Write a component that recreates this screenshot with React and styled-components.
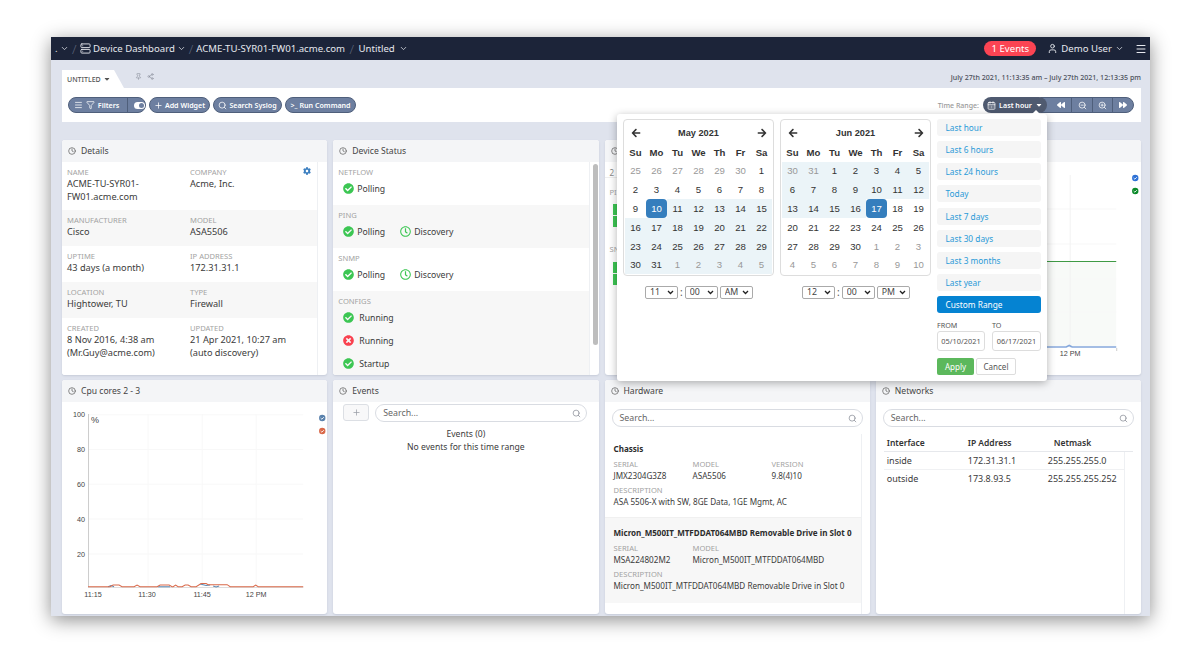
import React from 'react'
import styled, { createGlobalStyle } from 'styled-components'
import { Clock, ChevronDown, Menu, Filter, Plus, Search, User, Pin, Share2, CalendarDays, ZoomOut, ZoomIn, Server } from 'lucide-react'
import { FaArrowLeft, FaArrowRight, FaBackward, FaForward, FaCaretDown, FaCog, FaCheckCircle, FaTimesCircle, FaRegClock } from 'react-icons/fa'

const GlobalStyle = createGlobalStyle`
    html, body {
        margin: 0;
        background: #fff;
        font-family: "Noto Sans", "Open Sans", sans-serif;
        color: #333;
    }
    * { box-sizing: border-box; }
`

const Page = styled.div`
    width: 1200px;
    height: 654px;
    padding: 37px 50px 38px 51px;
    overflow: hidden;
`
const Window = styled.div`
    position: relative;
    height: 579px;
    background: #dfe3ed;
    overflow: hidden;
    box-shadow: 0 4px 18px rgba(0, 0, 0, 0.45);
`
const TopBar = styled.div`
    height: 23px;
    background: #1c2439;
    color: #e6e8ee;
    display: flex;
    align-items: center;
    padding: 0 3px 0 4px;
    font-size: 9.6px;
`
const Crumb = styled.span`
    display: flex;
    align-items: center;
    gap: ${p => p.$gap || 4}px;
    white-space: nowrap;
`
const Slash = styled.span`
    color: #5b6378;
    margin: 0 ${p => p.$m || 4}px;
    font-size: 13px;
    font-weight: 300;
`
const Spacer = styled.div`
    flex: 1;
`
const EventsBadge = styled.div`
    background: #fb4453;
    color: #fff;
    height: 15px;
    width: 52px;
    border-radius: 8px;
    display: flex;
    align-items: center;
    justify-content: center;
    margin-right: 11px;
`
const UserName = styled(Crumb)`
    margin-right: 11px;
`
const TabRow = styled.div`
    height: 28px;
    padding: 10px 9px 0 11px;
    display: flex;
    align-items: flex-end;
`
const Tab = styled.div`
    width: 62px;
    height: 18px;
    background: #fff;
    clip-path: polygon(0 0, 52px 0, 100% 100%, 0 100%);
    font-size: 7px;
    color: #555;
    font-weight: 500;
    display: flex;
    align-items: center;
    gap: 2px;
    padding-left: 5px;
`
const TabTools = styled.div`
    display: flex;
    align-items: center;
    gap: 5px;
    color: #8a8f9b;
    margin: 0 0 8px 11px;
`
const DateRange = styled.div`
    margin: 0 0 6px auto;
    font-size: 7.05px;
    font-weight: 500;
    color: #4a4f5a;
`
const Toolbar = styled.div`
    margin: 0 9px 0 11px;
    height: 34px;
    background: #fff;
    display: flex;
    align-items: center;
    padding: 0 7px 0 6px;
    gap: 3px;
`
const Pill = styled.div`
    height: 16px;
    background: #6d7fa0;
    border: 1px solid #4f5f7b;
    border-radius: 8px;
    color: #fff;
    font-size: 7.1px;
    font-weight: 600;
    display: flex;
    align-items: center;
    justify-content: center;
    gap: 2px;
    width: ${p => p.$w}px;
    white-space: nowrap;
`
const FilterPill = styled(Pill)`
    justify-content: flex-start;
    padding-left: 5px;
    gap: 3px;
`
const PillDivider = styled.span`
    width: 1px;
    height: 14px;
    background: #4f5f7b;
    margin-left: 5px;
`
const Toggle = styled.span`
    width: 12px;
    height: 7px;
    border-radius: 4px;
    background: #fff;
    margin-left: 3px;
    display: flex;
    justify-content: flex-end;
    align-items: center;
    padding-right: 1px;
    &::after {
        content: '';
        width: 5px;
        height: 5px;
        border-radius: 50%;
        background: #6d7fa0;
    }
`
const TimeLabel = styled.span`
    margin-left: auto;
    font-size: 7px;
    color: #999;
    font-weight: 500;
`
const TimeGroup = styled.div`
    display: flex;
    height: 16px;
    margin-left: 1px;
`
const LastHour = styled.div`
    width: 64px;
    background: #4f5a70;
    color: #fff;
    border-radius: 8px;
    font-size: 7.1px;
    font-weight: 600;
    display: flex;
    align-items: center;
    justify-content: center;
    gap: 3px;
    position: relative;
    z-index: 1;
`
const TimeSegments = styled.div`
    width: 94px;
    margin-left: -7px;
    padding-left: 9px;
    background: #6d7fa0;
    border: 1px solid #4f5f7b;
    border-radius: 0 8px 8px 0;
    color: #fff;
    display: grid;
    grid-template-columns: 22px 21px 20px 1fr;
    span {
        display: flex;
        align-items: center;
        justify-content: center;
        border-right: 1px solid #4f5f7b;
    }
    span:last-child { border-right: 0; }
`
const Grid = styled.div`
    margin: 18px 9px 0 11px;
    display: grid;
    grid-template-columns: repeat(4, 1fr);
    grid-template-rows: 235px 234px;
    gap: 5px 6px;
`
const Card = styled.section`
    background: #fff;
    border-radius: 3px;
    overflow: hidden;
    display: flex;
    flex-direction: column;
    box-shadow: 0 1px 2px rgba(90, 100, 130, 0.18);
`
const CardHead = styled.header`
    height: 22px;
    flex: none;
    background: #f4f5f7;
    display: flex;
    align-items: center;
    gap: 5px;
    padding-left: 6px;
    font-size: 8.6px;
    color: #444;
    svg { color: #555; }
`
const CardBody = styled.div`
    flex: 1;
    min-height: 0;
    display: flex;
    position: relative;
`
const RowList = styled.div`
    flex: 1;
    display: flex;
    flex-direction: column;
`
const Track = styled.div`
    width: ${p => p.$w || 10}px;
    flex: none;
    border-left: 1px solid #eef0f3;
    padding: 2px 0 0 3px;
`
const Thumb = styled.div`
    width: 5px;
    height: 181px;
    border-radius: 3px;
    background: #bdbdbd;
`
const DetailRow = styled.div`
    height: ${p => p.$h}px;
    flex: ${p => (p.$grow ? 1 : 'none')};
    background: ${p => (p.$alt ? '#f7f7f7' : '#fff')};
    padding: 5px 5px 0;
    display: grid;
    grid-template-columns: 123px 1fr;
    position: relative;
`
const Field = styled.div`
    min-width: 0;
    grid-column: ${p => (p.$span ? `span ${p.$span}` : 'auto')};
`
const Label = styled.div`
    font-size: 7.6px;
    line-height: 10px;
    color: #a3a3a3;
    text-transform: uppercase;
`
const Value = styled.div`
    font-size: 9.2px;
    line-height: 12.5px;
    color: #3b3b3b;
    margin-top: 1px;
`
const Gear = styled.span`
    position: absolute;
    top: 5px;
    right: 6px;
    color: #3c7fc0;
    font-size: 8px;
    line-height: 8px;
`
const StatusRow = styled.div`
    height: ${p => p.$h}px;
    flex: ${p => (p.$grow ? 1 : 'none')};
    background: ${p => (p.$alt ? '#f7f7f7' : '#fff')};
    padding: 5px 5px 0;
`
const StatusLine = styled.div`
    display: flex;
    height: ${p => p.$h || 23}px;
    align-items: center;
    padding-left: 5px;
    gap: 15px;
`
const Status = styled.span`
    display: flex;
    align-items: center;
    gap: ${p => p.$gap || 3}px;
    font-size: 8.7px;
    color: #3b3b3b;
    svg { color: ${p => p.$color || '#3cc653'}; }
`
const StubLine = styled.div`
    font-size: 8px;
    line-height: 11px;
    color: #888;
    padding: 5px 0 0 5px;
    height: 16px;
    border-bottom: 1px solid #eee;
`
const StubLabel = styled.div`
    font-size: 7.6px;
    line-height: 10px;
    color: #a3a3a3;
    padding: ${p => p.$top}px 0 0 5px;
`
const StubBar = styled.div`
    width: 4px;
    height: 11px;
    margin: ${p => p.$mt || 1}px 0 0 8px;
    background: #3cc653;
`
const ChartSvg = styled.svg`
    display: block;
    width: 100%;
    height: 100%;
    text {
        font-family: "Liberation Sans", Arial, sans-serif;
        font-size: 7.2px;
        fill: #444;
    }
`
const SearchBox = styled.div`
    height: 18px;
    flex: ${p => (p.$grow ? 1 : 'none')};
    border: 1px solid #d9dce2;
    border-radius: 9px;
    display: flex;
    align-items: center;
    justify-content: space-between;
    padding: 0 5px 0 7px;
    font-size: 8.8px;
    color: #666;
    background: #fff;
    svg { color: #8b8f98; }
`
const EventsTools = styled.div`
    display: flex;
    gap: 6px;
    padding: 2px 12px 0 10px;
`
const AddBox = styled.div`
    width: 26px;
    height: 17px;
    border: 1px solid #dcdfe4;
    border-radius: 3px;
    background: #f8f8f9;
    color: #9a9ea6;
    display: flex;
    align-items: center;
    justify-content: center;
`
const EventsText = styled.div`
    text-align: center;
    font-size: 8.6px;
    line-height: 13px;
    padding-top: 6px;
    color: #3b3b3b;
`
const Column = styled.div`
    flex: 1;
    min-width: 0;
    display: flex;
    flex-direction: column;
`
const SearchWrap = styled.div`
    padding: 7px;
    display: flex;
`
const HwRow = styled.div`
    height: ${p => p.$h}px;
    background: ${p => (p.$alt ? '#f7f7f7' : '#fff')};
    padding: 9px 5px 0 9px;
    border-bottom: ${p => (p.$alt ? '0' : '1px solid #f0f0f0')};
    & > b {
        display: block;
        font-size: 8.05px;
        line-height: 12px;
        font-weight: 700;
        color: #2c2c2c;
        white-space: nowrap;
    }
`
const HwFields = styled.div`
    display: grid;
    grid-template-columns: 79px 79px 1fr;
    margin-top: ${p => p.$mt || 4}px;
`
const HwValue = styled(Value)`
    font-size: 8.15px;
    line-height: 11.5px;
    white-space: nowrap;
`
const NetBody = styled.div`
    margin: 0 8px 0 8px;
    flex: 1;
    display: flex;
    flex-direction: column;
`
const NetHead = styled.div`
    display: grid;
    grid-template-columns: 81px 86px 1fr;
    height: 18px;
    padding: 0 0 0 3px;
    align-items: center;
    font-size: 8.5px;
    font-weight: 600;
    color: #333;
    border-bottom: 1px solid #e6e8ec;
`
const NetMain = styled.div`
    flex: 1;
    display: flex;
`
const NetRow = styled.div`
    display: grid;
    grid-template-columns: 81px 80px 1fr;
    height: 18px;
    padding-left: 3px;
    align-items: center;
    font-size: 9px;
    color: #3b3b3b;
    border-bottom: 1px solid ${p => (p.$last ? 'transparent' : '#f0f1f3')};
`
const Popover = styled.div`
    position: absolute;
    left: 566px;
    top: 77px;
    width: 430px;
    height: 267px;
    background: #fff;
    border-radius: 3px;
    box-shadow: 0 2px 8px rgba(0, 0, 0, 0.3);
    padding: 5px 6px 0;
    display: flex;
    gap: 5px;
    z-index: 5;
    &::before {
        content: '';
        position: absolute;
        top: -4px;
        left: 415px;
        border: 4px solid transparent;
        border-top: 0;
        border-bottom-color: #fff;
    }
`
const CalColumn = styled.div`
    width: 151px;
    margin-right: 1px;
`
const CalBox = styled.div`
    width: 151px;
    height: 157px;
    border: 1px solid #ddd;
    border-radius: 4px;
    padding: 4px 1px 0;
    font-family: "Liberation Sans", Arial, sans-serif;
    font-size: 9.6px;
    color: #333;
`
const CalGrid = styled.div`
    display: grid;
    grid-template-columns: repeat(7, 21px);
    grid-auto-rows: 18.8px;
    align-items: stretch;
`
const Cell = styled.div`
    display: flex;
    align-items: center;
    justify-content: center;
    color: ${p => (p.$active ? '#fff' : p.$muted ? '#999' : '#333')};
    background: ${p => (p.$active ? '#357ebd' : p.$range ? '#ebf4f8' : 'transparent')};
    border-radius: ${p => (p.$active ? '4px' : '0')};
`
const HeadCell = styled(Cell)`
    font-weight: 700;
`
const Month = styled.div`
    grid-column: span 5;
    display: flex;
    align-items: center;
    justify-content: center;
    font-weight: 700;
    font-size: 9.2px;
`
const TimePick = styled.div`
    display: flex;
    align-items: center;
    gap: 2px;
    padding: 9px 0 0 22px;
    font-size: 10px;
    color: #555;
`
const TimeSelect = styled.select`
    appearance: none;
    width: 33px;
    height: 13px;
    font-family: "Noto Sans", sans-serif;
    font-size: 8.8px;
    line-height: 11px;
    color: #444;
    padding: 0 0 0 4px;
    border: 1px solid #aaa;
    border-radius: 2px;
    background: #fff url("data:image/svg+xml,%3Csvg xmlns='http://www.w3.org/2000/svg' width='7' height='5'%3E%3Cpath d='M1 1l2.5 2.5L6 1' stroke='%23222' stroke-width='1.3' fill='none'/%3E%3C/svg%3E") no-repeat right 3px center;
`
const Presets = styled.div`
    width: 104px;
    display: flex;
    flex-direction: column;
    gap: 5.15px;
`
const Preset = styled.div`
    height: 17px;
    border-radius: 3px;
    background: ${p => (p.$on ? '#0583d2' : '#f5f5f5')};
    color: ${p => (p.$on ? '#fff' : '#2a9bd8')};
    font-size: 8.3px;
    display: flex;
    align-items: center;
    padding-left: 8.5px;
`
const RangeInputs = styled.div`
    display: grid;
    grid-template-columns: 48px 49px;
    gap: 1px 7px;
    margin-top: 2px;
    label {
        font-size: 7.2px;
        color: #555;
    }
`
const DateBox = styled.div`
    height: 20px;
    border: 1px solid #ddd;
    border-radius: 3px;
    font-size: 7.4px;
    color: #555;
    display: flex;
    align-items: center;
    justify-content: center;
`
const Actions = styled.div`
    display: flex;
    gap: 2px;
    margin-top: 2px;
`
const ApplyBtn = styled.div`
    width: 37px;
    height: 17px;
    border-radius: 2px;
    background: #5cb85c;
    color: #fff;
    font-size: 8px;
    display: flex;
    align-items: center;
    justify-content: center;
`
const CancelBtn = styled(ApplyBtn)`
    width: 40px;
    background: #fff;
    color: #555;
    border: 1px solid #ddd;
`

const buildMonth = (start, prevDays, days) => {
    const out = []
    for (let i = 0; i < start; i++) out.push({ d: prevDays - start + 1 + i, muted: true })
    for (let i = 1; i <= days; i++) out.push({ d: i })
    let n = 1
    while (out.length < 42) out.push({ d: n++, muted: true })
    return out
}

const weekdays = ['Su', 'Mo', 'Tu', 'We', 'Th', 'Fr', 'Sa']
const presets = ['Last hour', 'Last 6 hours', 'Last 24 hours', 'Today', 'Last 7 days', 'Last 30 days', 'Last 3 months', 'Last year']

const CalendarMonth = ({ title, cells, from, to, active }) => (
    <CalBox>
        <CalGrid>
            <Cell><FaArrowLeft size={10} /></Cell>
            <Month>{title}</Month>
            <Cell><FaArrowRight size={10} /></Cell>
            {weekdays.map(w => <HeadCell key={w}>{w}</HeadCell>)}
            {cells.map((c, i) => (
                <Cell key={i} $muted={c.muted} $active={i === active} $range={i >= from && i <= to}>{c.d}</Cell>
            ))}
        </CalGrid>
    </CalBox>
)

const TimeSelects = ({ hour, ampm }) => (
    <TimePick>
        <TimeSelect defaultValue={hour}><option>{hour}</option></TimeSelect>
        <span>:</span>
        <TimeSelect defaultValue="00"><option>00</option></TimeSelect>
        <TimeSelect defaultValue={ampm}><option>{ampm}</option></TimeSelect>
    </TimePick>
)

const Check = ({ x, y, color }) => (
    <g>
        <circle cx={x} cy={y} r="3.2" fill={color} />
        <path d={`M${x - 1.6} ${y} l1.2 1.2 l2 -2`} stroke="#fff" strokeWidth="0.9" fill="none" />
    </g>
)

const CpuChart = () => {
    const lines = [414.7, 449.5, 484.3, 519.1, 553.9]
    const bump = 'M88 586.7 H110 L113 585 H119 L122 586.7 H134 L137 585 L140 586.7 H157 L160 585 H169 L172 586.7 H173 L175.5 585 L178 586.7 H182 L185 585 H188 L191 586.7 H196 L201 583.5 H206 L208 584.7 H222 H227 L230 586.7 H253 L255.5 585 L258 586.7 H303'
    return (
        <ChartSvg viewBox="62 402 265 212" preserveAspectRatio="none">
            {lines.map(y => <line key={y} x1="88" x2="303" y1={y} y2={y} stroke="#f8f8f8" />)}
            {[148, 202, 256].map(x => <line key={x} x1={x} x2={x} y1="414" y2="588" stroke="#f8f8f8" />)}
            <line x1="88.5" x2="88.5" y1="414" y2="588" stroke="#ccc" />
            <line x1="88" x2="303" y1="587.5" y2="587.5" stroke="#ddd" />
            {[['100', 417], ['80', 452], ['60', 487], ['40', 522], ['20', 557]].map(([t, y]) => (
                <text key={t} x="85" y={y} textAnchor="end">{t}</text>
            ))}
            <text x="91" y="423" style={{ fontSize: 9 }}>%</text>
            {[['11:15', 93], ['11:30', 147], ['11:45', 202], ['12 PM', 256]].map(([t, x]) => (
                <text key={t} x={x} y="597" textAnchor="middle">{t}</text>
            ))}
            <path d="M108 586.7 L111 585.5 L114 586.7 M158 586.7 H170 M200 584 L206 585.5 L210 585 M213 586 L216 587 L219 586" stroke="#5b8bb5" strokeWidth="1" fill="none" />
            <path d={bump} stroke="#d9694a" strokeWidth="1" fill="none" />
            <Check x={322} y={418} color="#5a82ad" />
            <Check x={322} y={431} color="#d9694a" />
        </ChartSvg>
    )
}

const TrafficChart = () => (
    <ChartSvg viewBox="876 162 265 213" preserveAspectRatio="none">
        <rect x="900" y="262" width="216" height="84" fill="#f8faf8" />
        {[209, 244, 279, 312].map(y => <line key={y} x1="900" x2="1116" y1={y} y2={y} stroke="#f7f7f7" />)}
        <line x1="1070" x2="1070" y1="175" y2="348" stroke="#f2f2f2" />
        <line x1="900" x2="1116" y1="261.5" y2="261.5" stroke="#3f9a45" strokeWidth="1.2" />
        <path d="M900 347 H1066 L1069 345.5 L1072 347 H1116" stroke="#86a8dc" strokeWidth="1.6" fill="none" />
        <line x1="1116.5" x2="1116.5" y1="348" y2="351" stroke="#ccc" />
        <text x="1070" y="356" textAnchor="middle">12 PM</text>
        <Check x={1135} y={178} color="#2f72d6" />
        <Check x={1135} y={191} color="#0b8a2a" />
    </ChartSvg>
)

const detailRows = [
    { h: 48, items: [['Name', <>ACME-TU-SYR01-<br />FW01.acme.com</>], ['Company', 'Acme, Inc.']], gear: true },
    { h: 36, alt: true, items: [['Manufacturer', 'Cisco'], ['Model', 'ASA5506']] },
    { h: 36, items: [['Uptime', '43 days (a month)'], ['IP Address', '172.31.31.1']] },
    { h: 36, alt: true, items: [['Location', 'Hightower, TU'], ['Type', 'Firewall']] },
    { grow: true, items: [['Created', <>8 Nov 2016, 4:38 am<br />(Mr.Guy@acme.com)</>], ['Updated', <>21 Apr 2021, 10:27 am<br />(auto discovery)</>]] },
]

const Polling = () => <Status><FaCheckCircle size={11} />Polling</Status>
const Discovery = () => <Status><FaRegClock size={11} />Discovery</Status>
const Cfg = ({ name, bad }) => (
    <StatusLine>
        <Status $gap={5} $color={bad ? '#f9414f' : '#3cc653'}>
            {bad ? <FaTimesCircle size={11} /> : <FaCheckCircle size={11} />}{name}
        </Status>
    </StatusLine>
)

export default function App() {
    const may = buildMonth(6, 30, 31)
    const jun = buildMonth(2, 31, 30)
    return (
        <Page>
            <GlobalStyle />
            <Window>
                <TopBar>
                    <Crumb $gap={2}>.<ChevronDown size={9} /></Crumb>
                    <Slash $m={3.5}>/</Slash>
                    <Crumb $gap={2}><Server size={11} /> Device Dashboard <ChevronDown size={9} /></Crumb>
                    <Slash $m={3}>/</Slash>
                    <Crumb>ACME-TU-SYR01-FW01.acme.com</Crumb>
                    <Slash $m={4.5}>/</Slash>
                    <Crumb>Untitled <ChevronDown size={9} /></Crumb>
                    <Spacer />
                    <EventsBadge>1 Events</EventsBadge>
                    <UserName $gap={3}><User size={11} /> Demo User <ChevronDown size={9} /></UserName>
                    <Menu size={12} />
                </TopBar>
                <TabRow>
                    <Tab>UNTITLED <FaCaretDown size={8} /></Tab>
                    <TabTools><Pin size={7} /><Share2 size={7} /></TabTools>
                    <DateRange>July 27th 2021, 11:13:35 am – July 27th 2021, 12:13:35 pm</DateRange>
                </TabRow>
                <Toolbar>
                    <FilterPill $w={78}>
                        <Menu size={10} /><Filter size={10} /> Filters<PillDivider /><Toggle />
                    </FilterPill>
                    <Pill $w={61}><Plus size={9} /> Add Widget</Pill>
                    <Pill $w={69}><Search size={9} /> Search Syslog</Pill>
                    <Pill $w={71}><span>&gt;_</span> Run Command</Pill>
                    <TimeLabel>Time Range:</TimeLabel>
                    <TimeGroup>
                        <LastHour><CalendarDays size={9} /> Last hour <FaCaretDown size={8} /></LastHour>
                        <TimeSegments>
                            <span><FaBackward size={8} /></span>
                            <span><ZoomOut size={9} /></span>
                            <span><ZoomIn size={9} /></span>
                            <span><FaForward size={8} /></span>
                        </TimeSegments>
                    </TimeGroup>
                </Toolbar>
                <Grid>
                    <Card>
                        <CardHead><Clock size={8} /> Details</CardHead>
                        <CardBody>
                            <RowList>
                                {detailRows.map((r, i) => (
                                    <DetailRow key={i} $h={r.h} $alt={r.alt} $grow={r.grow}>
                                        {r.items.map(([l, v]) => (
                                            <Field key={l}><Label>{l}</Label><Value>{v}</Value></Field>
                                        ))}
                                        {r.gear && <Gear><FaCog size={8} /></Gear>}
                                    </DetailRow>
                                ))}
                            </RowList>
                            <Track />
                        </CardBody>
                    </Card>
                    <Card>
                        <CardHead><Clock size={8} /> Device Status</CardHead>
                        <CardBody>
                            <RowList>
                                <StatusRow $h={43}><Label>Netflow</Label><StatusLine><Polling /></StatusLine></StatusRow>
                                <StatusRow $h={43} $alt><Label>Ping</Label><StatusLine><Polling /><Discovery /></StatusLine></StatusRow>
                                <StatusRow $h={43}><Label>SNMP</Label><StatusLine><Polling /><Discovery /></StatusLine></StatusRow>
                                <StatusRow $grow $alt>
                                    <Label>Configs</Label>
                                    <Cfg name="Running" />
                                    <Cfg name="Running" bad />
                                    <Cfg name="Startup" />
                                </StatusRow>
                            </RowList>
                            <Track><Thumb /></Track>
                        </CardBody>
                    </Card>
                    <Card>
                        <CardHead><Clock size={8} /></CardHead>
                        <StubLine>2</StubLine>
                        <StubLabel $top={9}>PI</StubLabel>
                        <StubBar $mt={7} />
                        <StubBar />
                        <StubLabel $top={17}>SN</StubLabel>
                        <StubBar $mt={8} />
                        <StubBar />
                    </Card>
                    <Card>
                        <CardHead />
                        <CardBody><TrafficChart /></CardBody>
                    </Card>
                    <Card>
                        <CardHead><Clock size={8} /> Cpu cores 2 - 3</CardHead>
                        <CardBody><CpuChart /></CardBody>
                    </Card>
                    <Card>
                        <CardHead><Clock size={8} /> Events</CardHead>
                        <Column>
                            <EventsTools>
                                <AddBox><Plus size={9} /></AddBox>
                                <SearchBox $grow>Search...<Search size={9} /></SearchBox>
                            </EventsTools>
                            <EventsText>Events (0)<br />No events for this time range</EventsText>
                        </Column>
                    </Card>
                    <Card>
                        <CardHead><Clock size={8} /> Hardware</CardHead>
                        <SearchWrap><SearchBox $grow>Search...<Search size={9} /></SearchBox></SearchWrap>
                        <CardBody>
                            <Column>
                                <HwRow $h={84}>
                                    <b>Chassis</b>
                                    <HwFields>
                                        <Field><Label>Serial</Label><HwValue>JMX2304G3Z8</HwValue></Field>
                                        <Field><Label>Model</Label><HwValue>ASA5506</HwValue></Field>
                                        <Field><Label>Version</Label><HwValue>9.8(4)10</HwValue></Field>
                                    </HwFields>
                                    <HwFields $mt={3}>
                                        <Field $span={3}><Label>Description</Label><HwValue>ASA 5506-X with SW, 8GE Data, 1GE Mgmt, AC</HwValue></Field>
                                    </HwFields>
                                </HwRow>
                                <HwRow $h={85} $alt>
                                    <b>Micron_M500IT_MTFDDAT064MBD Removable Drive in Slot 0</b>
                                    <HwFields>
                                        <Field><Label>Serial</Label><HwValue>MSA224802M2</HwValue></Field>
                                        <Field $span={2}><Label>Model</Label><HwValue>Micron_M500IT_MTFDDAT064MBD</HwValue></Field>
                                    </HwFields>
                                    <HwFields $mt={3}>
                                        <Field $span={3}><Label>Description</Label><HwValue>Micron_M500IT_MTFDDAT064MBD Removable Drive in Slot 0</HwValue></Field>
                                    </HwFields>
                                </HwRow>
                            </Column>
                            <Track $w={9} />
                        </CardBody>
                    </Card>
                    <Card>
                        <CardHead><Clock size={8} /> Networks</CardHead>
                        <SearchWrap><SearchBox $grow>Search...<Search size={9} /></SearchBox></SearchWrap>
                        <NetBody>
                            <NetHead><span>Interface</span><span>IP Address</span><span>Netmask</span></NetHead>
                            <NetMain>
                                <Column>
                                    <NetRow><span>inside</span><span>172.31.31.1</span><span>255.255.255.0</span></NetRow>
                                    <NetRow $last><span>outside</span><span>173.8.93.5</span><span>255.255.255.252</span></NetRow>
                                </Column>
                                <Track $w={9} />
                            </NetMain>
                        </NetBody>
                    </Card>
                </Grid>
                <Popover>
                    <CalColumn>
                        <CalendarMonth title="May 2021" cells={may} from={15} to={41} active={15} />
                        <TimeSelects hour="11" ampm="AM" />
                    </CalColumn>
                    <CalColumn>
                        <CalendarMonth title="Jun 2021" cells={jun} from={0} to={18} active={18} />
                        <TimeSelects hour="12" ampm="PM" />
                    </CalColumn>
                    <Presets>
                        {presets.map(p => <Preset key={p}>{p}</Preset>)}
                        <Preset $on>Custom Range</Preset>
                        <RangeInputs>
                            <label>FROM</label><label>TO</label>
                            <DateBox>05/10/2021</DateBox><DateBox>06/17/2021</DateBox>
                        </RangeInputs>
                        <Actions><ApplyBtn>Apply</ApplyBtn><CancelBtn>Cancel</CancelBtn></Actions>
                    </Presets>
                </Popover>
            </Window>
        </Page>
    )
}
